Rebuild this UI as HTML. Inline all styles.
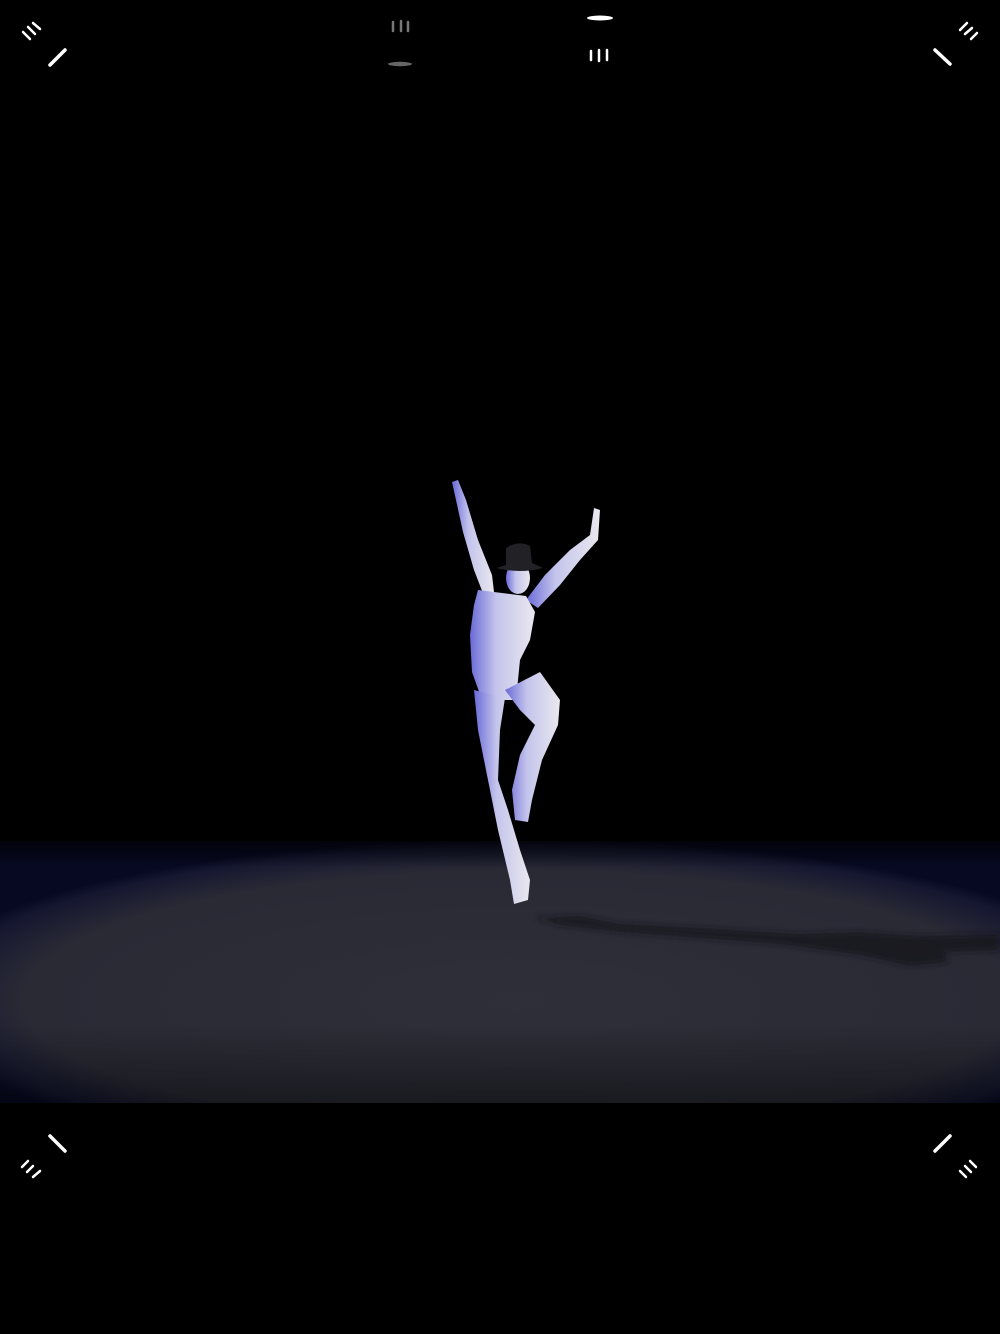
<!DOCTYPE html>
<html><head><meta charset="utf-8"><style>
html,body{margin:0;padding:0;background:#000;}
body{width:1000px;height:1334px;position:relative;overflow:hidden;font-family:"Liberation Sans",sans-serif;}
svg{position:absolute;left:0;top:0;}
</style></head><body>
<svg width="1000" height="1334" viewBox="0 0 1000 1334" xmlns="http://www.w3.org/2000/svg">
<defs>
<radialGradient id="spot" cx="520" cy="1000" r="620" gradientUnits="userSpaceOnUse" gradientTransform="translate(0,1000) scale(1,0.26) translate(0,-1000)">
<stop offset="0" stop-color="#2f2f39"/>
<stop offset="0.8" stop-color="#2a2a35"/>
<stop offset="0.95" stop-color="#151730"/>
<stop offset="1" stop-color="#070922"/>
</radialGradient>
<linearGradient id="fade" x1="0" y1="0" x2="0" y2="1">
<stop offset="0" stop-color="#000" stop-opacity="0.7"/>
<stop offset="0.1" stop-color="#000" stop-opacity="0"/>
<stop offset="0.7" stop-color="#000" stop-opacity="0"/>
<stop offset="1" stop-color="#000" stop-opacity="0.4"/>
</linearGradient>
<linearGradient id="body" x1="0" y1="0" x2="1" y2="0">
<stop offset="0" stop-color="#6a6ad8"/>
<stop offset="0.4" stop-color="#c4c4ec"/>
<stop offset="1" stop-color="#eae8ee"/>
</linearGradient>
<filter id="bl"><feGaussianBlur stdDeviation="3"/></filter>
</defs>
<rect x="0" y="841" width="1000" height="262" fill="#0a0c24"/>
<rect x="0" y="841" width="1000" height="262" fill="url(#spot)"/>
<rect x="0" y="841" width="1000" height="262" fill="url(#fade)"/>
<path d="M535 918 L580 916 L620 924 L700 928 L800 934 L860 932 L920 936 L1000 934 L1000 950 L945 952 L948 962 L910 966 L860 955 L780 944 L700 938 L620 932 L560 925 Z" fill="#14141e" filter="url(#bl)" opacity="0.8"/>
<g fill="url(#body)">
<path d="M452 482 L458 480 L466 500 L478 540 L492 575 L494 592 L484 596 L474 570 L463 532 L456 500 Z"/>
<path d="M594 508 L600 510 L598 540 L580 560 L560 585 L538 608 L526 600 L545 575 L570 550 L590 535 Z"/>
<path d="M478 590 L526 596 L535 612 L530 640 L520 660 L516 700 L505 700 L482 700 L472 672 L470 635 L474 605 Z"/>
<path d="M474 690 L505 698 L500 730 L498 780 L508 810 L520 850 L530 880 L528 900 L514 904 L510 880 L498 830 L488 780 L478 730 Z"/>
<path d="M505 690 L540 672 L560 700 L558 725 L542 760 L532 800 L528 822 L515 820 L512 790 L520 755 L535 725 L520 710 Z"/>
<ellipse cx="518" cy="578" rx="12" ry="16"/>
</g>
<path d="M496 568 Q520 574 543 568 L532 563 L530 546 Q518 540 506 548 L506 565 Z" fill="#222226"/>
<g stroke="#fff" stroke-linecap="round" fill="none">
<path d="M23 32 L30 39 M28 27 L35 34 M33 23 L40 29" stroke-width="2.5"/>
<path d="M50 65 L65 50" stroke-width="3.5"/>
<path d="M960 30 L967 23 M965 34 L972 28 M971 39 L977 33" stroke-width="2.5"/>
<path d="M935 50 L950 64" stroke-width="3.5"/>
<path d="M22 1167 L28 1161 M27 1172 L33 1166 M33 1177 L40 1171" stroke-width="2.5"/>
<path d="M50 1136 L65 1151" stroke-width="3.5"/>
<path d="M935 1151 L950 1136" stroke-width="3.5"/>
<path d="M960 1171 L966 1177 M965 1166 L971 1172 M970 1161 L976 1167" stroke-width="2.5"/>
<path d="M591 51 L591 60 M599 50 L599 61 M607 50 L607 60" stroke-width="2.5"/>
<path d="M393 22 L393 31 M401 21 L401 31 M408 22 L408 31" stroke="#777" stroke-width="2.5"/>
</g>
<ellipse cx="600" cy="18" rx="13" ry="2.5" fill="#fff"/>
<ellipse cx="400" cy="64" rx="12" ry="2.2" fill="#666"/>
</svg>
</body></html>
